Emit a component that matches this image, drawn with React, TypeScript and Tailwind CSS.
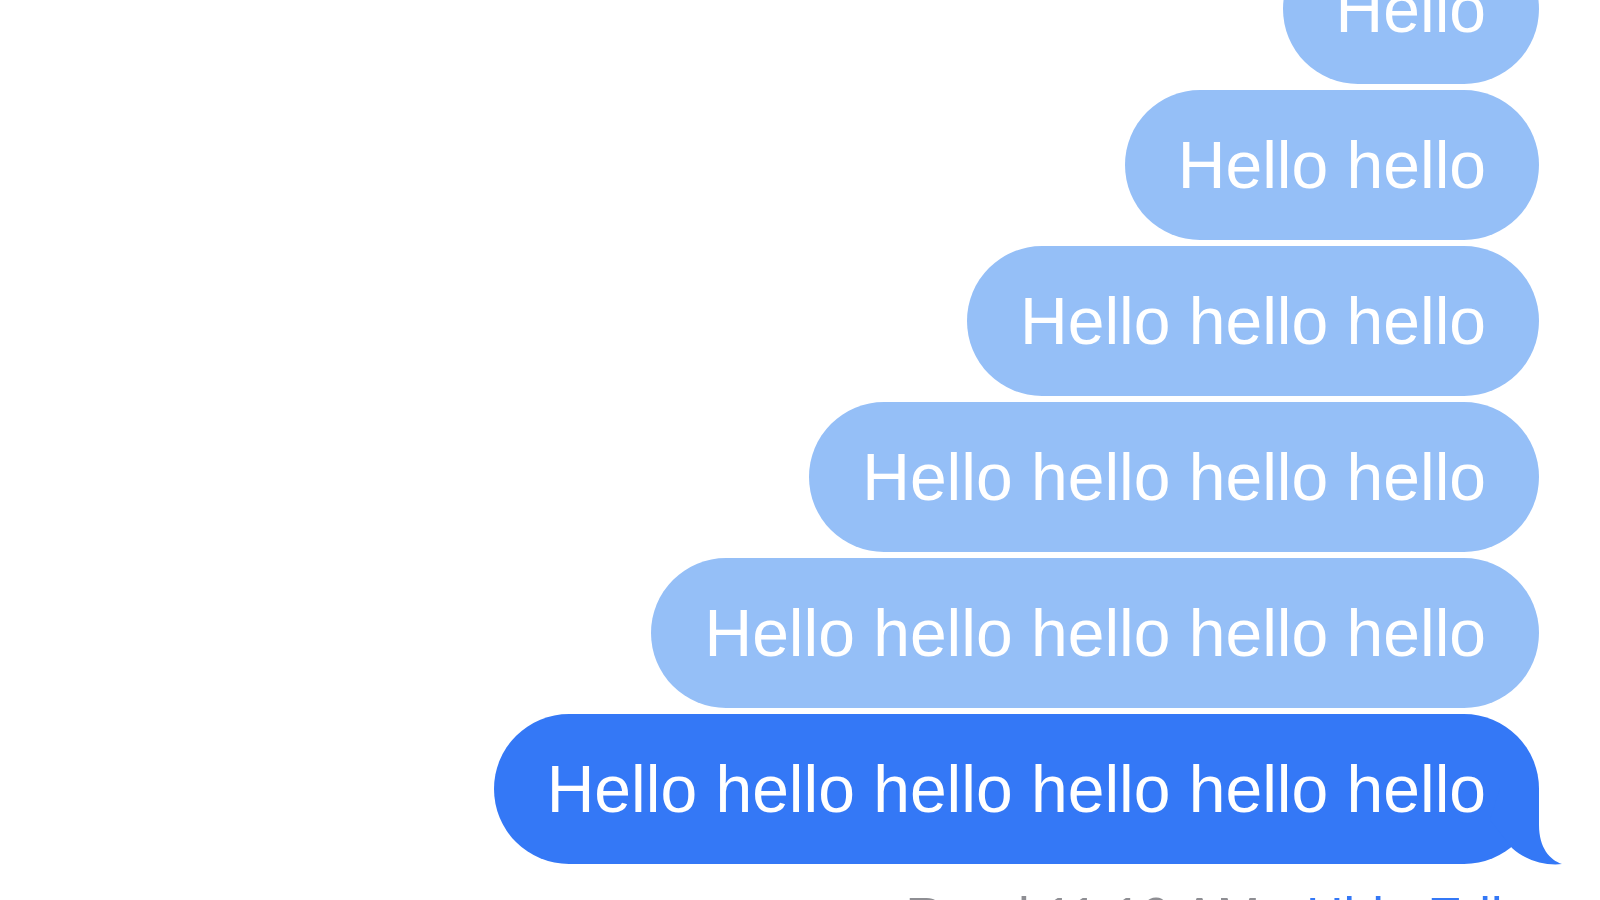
import React from 'react';

const messages = [
    'Hello',
    'Hello hello',
    'Hello hello hello',
    'Hello hello hello hello',
    'Hello hello hello hello hello',
    'Hello hello hello hello hello hello',
];

// iMessage-style tail for the last (sent) bubble
const Tail: React.FC = () => (
    <svg
        className="absolute right-[-26px] bottom-[-6px] w-[85px] h-[82px]"
        viewBox="0 0 85 82"
        fill="#3478f6"
    >
        <path d="M20 0 L59 0 L59 37 C59 60 70 72 82 76 C65 78 45 72 32 60 L10 32 Z"/>
    </svg>
);

const Bubble: React.FC<{text: string; last?: boolean}> = ({text, last}) => (
    <div
        className={`relative h-[150px] rounded-full flex items-center px-[53px] ${last ? 'bg-[#3478f6]' : 'bg-[#95bff7]'}`}
    >
        <span className="text-[66px] leading-none text-white whitespace-nowrap">{text}</span>
        {last && <Tail/>}
    </div>
);

export default function App() {
    return (
        <div
            className="w-[1600px] h-[900px] overflow-hidden bg-white"
            style={{fontFamily: '"Liberation Sans", Arial, sans-serif'}}
        >
            <div className="flex flex-col items-end gap-[6px] pr-[61px] -mt-[66px]">
                {messages.map((m, i) => (
                    <Bubble key={i} text={m} last={i === messages.length - 1}/>
                ))}
            </div>
            <div className="flex justify-end pr-[57px] mt-[26px] text-[52px] leading-none whitespace-nowrap">
                <span className="text-[#8e8e93]">Read 11:10 AM</span>
                <span className="ml-[46px] text-[#3478f6]">Hide Edits</span>
            </div>
        </div>
    );
}
